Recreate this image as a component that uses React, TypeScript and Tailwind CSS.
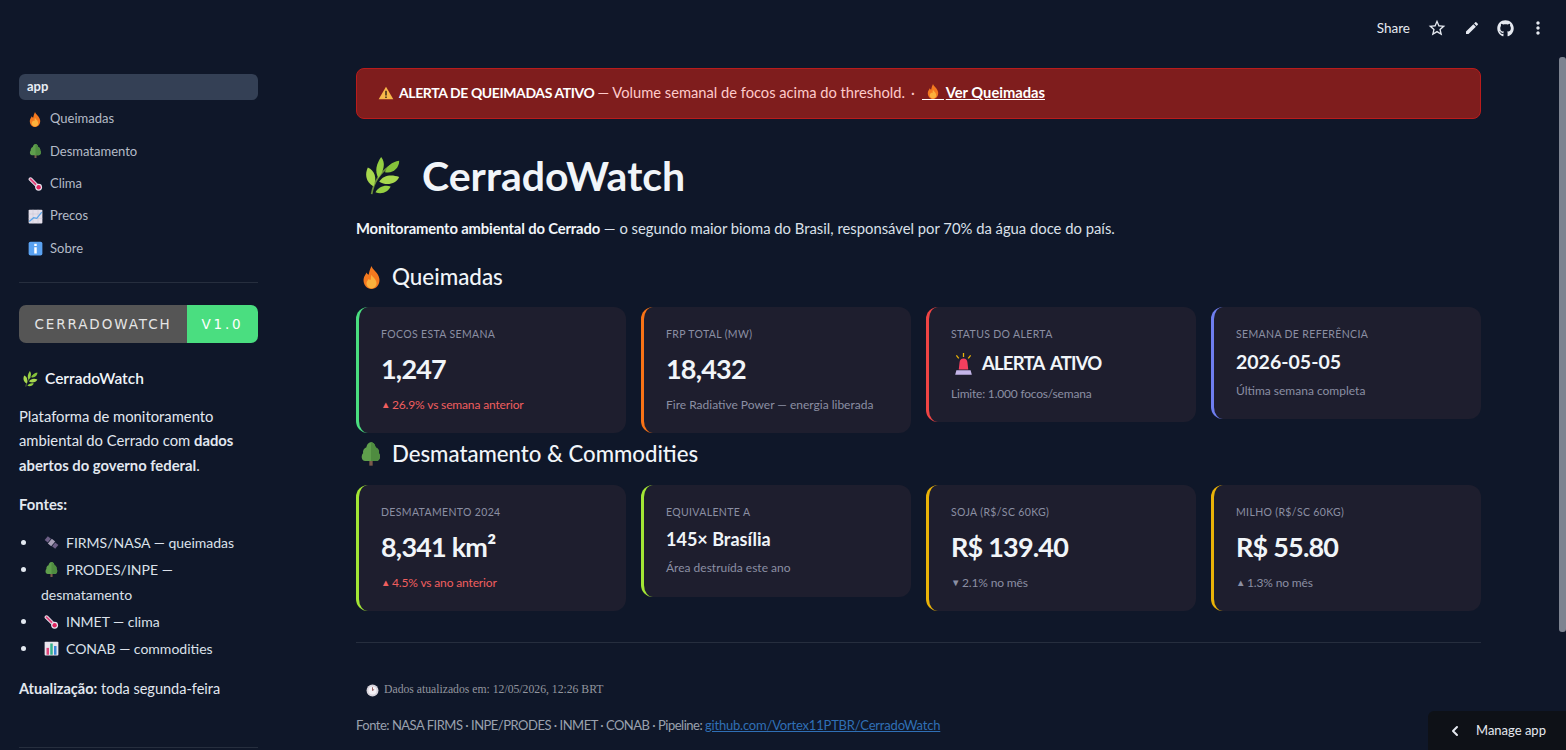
import React from "react";
import { MdStarBorder, MdEdit, MdMoreVert } from "react-icons/md";
import { FaGithub } from "react-icons/fa";
import { ChevronLeft } from "lucide-react";

type IconProps = { className?: string };

const Flame = ({ className }: IconProps) => (
  <svg viewBox="0 0 24 32" className={className}>
    <path d="M12 0c1 5 10 9 11 18 1 8-5 14-11 14S0 26 1 18c.5-4 3-6 4-9 1 2 2 3 3 3 1-4 2-8 4-12z" fill="#f4791f" />
    <path d="M12 12c1 3 7 6 7 12 0 4-3 7-7 7s-7-3-7-7c0-3 2-4 3-6 1 1 2 1 3 1 0-2 0-4 1-7z" fill="#fbb13c" />
  </svg>
);
const Evergreen = ({ className }: IconProps) => (
  <svg viewBox="0 0 24 28" className={className}>
    <rect x="10" y="20" width="4" height="8" fill="#7a5a4a" />
    <path d="M12 0c3 0 5 3 5.500 6 3 1 4.500 4 4 7 2 2 2 9-3 9.500H5C0 22 0 15 2.500 13c-.5-3 1-6 4-7C7 3 9 0 12 0z" fill="#5f9f4c" />
    <path d="M12 0c3 0 5 3 5.500 6 3 1 4.500 4 4 7 2 2 2 9-3 9.500H12z" fill="#4f8c40" />
  </svg>
);
const Thermo = ({ className }: IconProps) => (
  <svg viewBox="0 0 24 24" className={className}>
    <path d="M4 5 L15 16" stroke="#e9e3ee" strokeWidth="6" strokeLinecap="round" />
    <path d="M4 5 L15 16" stroke="#e0457b" strokeWidth="3" strokeLinecap="round" />
    <circle cx="17" cy="18" r="5.500" fill="#e9e3ee" />
    <circle cx="17" cy="18" r="3.500" fill="#e0245e" />
  </svg>
);
const ChartUp = ({ className }: IconProps) => (
  <svg viewBox="0 0 24 24" className={className}>
    <rect x="1" y="1" width="22" height="22" rx="1.500" fill="#e4dfea" />
    <path d="M1 8h22M1 15h22M8 1v22M16 1v22" stroke="#c6c0d0" strokeWidth="0.800" />
    <path d="M2 20 L9 14 L14 15 L22 5" stroke="#5aa5e8" strokeWidth="2" fill="none" />
  </svg>
);
const Info = ({ className }: IconProps) => (
  <svg viewBox="0 0 24 24" className={className}>
    <rect x="1" y="1" width="22" height="22" rx="3" fill="#5aa2f2" />
    <rect x="10" y="10" width="4" height="10" fill="#fff" />
    <rect x="10" y="4.500" width="4" height="3.500" fill="#fff" />
  </svg>
);
const Herb = ({ className }: IconProps) => (
  <svg viewBox="0 0 40 40" className={className}>
    <path d="M7 39c2-12 8-22 20-30" stroke="#6b8e3a" strokeWidth="1.800" fill="none" />
    <path d="M9 31C0 26 0 17 3 11c7 3 10 11 6 20z" fill="#a8d84e" />
    <path d="M14 22c-4-7-2-15 3-22 5 6 3 15-3 22z" fill="#95cf42" />
    <path d="M15 26c4-7 13-8 21-5-3 7-13 10-21 5z" fill="#a8d84e" />
    <path d="M21 16c2-6 7-11 15-12 0 8-7 14-15 12z" fill="#85c13a" />
    <path d="M11 37c3-5 9-8 16-6-2 5-9 9-16 6z" fill="#95cf42" />
  </svg>
);
const Satellite = ({ className }: IconProps) => (
  <svg viewBox="0 0 24 24" className={className}>
    <g transform="rotate(40 12 12)">
      <rect x="8.500" y="7" width="7" height="10" fill="#a9a0b8" />
      <rect x="1" y="8" width="6.500" height="8" fill="#6d5f86" />
      <rect x="16.500" y="8" width="6.500" height="8" fill="#6d5f86" />
    </g>
  </svg>
);
const Bars = ({ className }: IconProps) => (
  <svg viewBox="0 0 24 24" className={className}>
    <rect x="1" y="1" width="22" height="22" rx="1.500" fill="#e9e5ee" />
    <rect x="4" y="11" width="4" height="11" fill="#e0457b" />
    <rect x="10" y="4" width="4" height="18" fill="#37b28d" />
    <rect x="16" y="8" width="4" height="14" fill="#3a87d8" />
  </svg>
);
const Warning = ({ className }: IconProps) => (
  <svg viewBox="0 0 24 22" className={className}>
    <path d="M12 1 L23.500 21 H.5z" fill="#f8b84a" />
    <rect x="10.800" y="7.500" width="2.400" height="7.500" fill="#3a2a1a" />
    <rect x="10.800" y="16.500" width="2.400" height="2.400" fill="#3a2a1a" />
  </svg>
);
const Siren = ({ className }: IconProps) => (
  <svg viewBox="0 0 24 28" className={className}>
    <path d="M12 0v5M3 3l3 4M21 3l-3 4" stroke="#eab308" strokeWidth="1.600" />
    <path d="M6 21l1-9c.3-3 2-5 5-5s4.700 2 5 5l1 9z" fill="#f43f5e" />
    <path d="M3 22h18l1.500 5.500h-21z" fill="#c4b5e8" />
  </svg>
);
const Clock = ({ className }: IconProps) => (
  <svg viewBox="0 0 24 24" className={className}>
    <circle cx="12" cy="12" r="11" fill="#d8d4dc" />
    <circle cx="12" cy="12" r="7.500" fill="#f4f1f6" />
    <path d="M12 6v6l3-2" stroke="#8a4a4a" strokeWidth="1.600" fill="none" />
  </svg>
);

const navItems: [React.ReactNode, string][] = [
  [<Flame className="h-[15px] w-[12px]" />, "Queimadas"],
  [<Evergreen className="h-[14px] w-[13px]" />, "Desmatamento"],
  [<Thermo className="h-[15px] w-[15px]" />, "Clima"],
  [<ChartUp className="h-[15px] w-[15px]" />, "Precos"],
  [<Info className="h-[15px] w-[15px]" />, "Sobre"],
];

const sources: [React.ReactNode, string, string?][] = [
  [<Satellite className="h-[15px] w-[15px]" />, "FIRMS/NASA — queimadas"],
  [<Evergreen className="h-[15px] w-[15px]" />, "PRODES/INPE —", "desmatamento"],
  [<Thermo className="h-[15px] w-[15px]" />, "INMET — clima"],
  [<Bars className="h-[15px] w-[15px]" />, "CONAB — commodities"],
];

function Sidebar() {
  return (
    <aside className="flex w-[277px] shrink-0 flex-col px-[19px] pt-[74px] text-[14.800px] text-[#e2e8f0]">
      <div className="flex h-[26px] items-center rounded-[6px] bg-[#344055] px-2 text-[13px] font-bold text-[#e8edf4]">app</div>
      <nav className="mt-[3px] flex flex-col">
        {navItems.map(([icon, label]) => (
          <div key={label} className="flex h-[32.300px] items-center text-[13px] text-[#b4bbc7]">
            <span className="flex w-[31px] justify-center pl-[1px]">{icon}</span>
            <span>{label}</span>
          </div>
        ))}
      </nav>
      <div className="mt-[17.500px] h-px bg-[#262e3e]" />
      <div className="mt-[22px] flex h-[38px] overflow-hidden rounded-[7px] font-['DejaVu_Sans'] text-[13.500px] text-[#e5e5e5]">
        <span className="flex w-[168px] items-center justify-center bg-[#555555] tracking-[1.900px]">CERRADOWATCH</span>
        <span className="flex flex-1 items-center justify-center bg-[#4ade80] font-medium tracking-[2.800px] text-white">V1.0</span>
      </div>
      <div className="mt-[25px] flex h-[22px] items-center text-[15.500px] font-semibold text-[#f1f5f9]">
        <Herb className="mr-[6px] ml-[4px] h-[16px] w-[16px]" />CerradoWatch
      </div>
      <p className="mt-[14px] leading-[24.500px]">
        Plataforma de monitoramento ambiental do Cerrado com <strong className="font-bold">dados</strong> <strong className="font-bold">abertos do governo federal</strong>.
      </p>
      <p className="mt-[15px] font-bold leading-[24px]">Fontes:</p>
      <ul className="mt-[13px] flex flex-col text-[14px]">
        {sources.map(([icon, label, more]) => (
          <li key={label} className="flex flex-col text-[#dbe1ea]">
            <div className="relative flex h-[27px] items-center pl-[24px]">
              <span className="absolute left-[2px] h-[5px] w-[5px] rounded-full bg-[#e2e8f0]" />
              <span className="mr-[7px] flex w-[16px] justify-center">{icon}</span>
              {label}
            </div>
            {more && <div className="h-[25px] pl-[22px] leading-[23px]">{more}</div>}
          </li>
        ))}
      </ul>
      <p className="mt-[15px] text-[14.500px] leading-[24px]">
        <strong className="font-bold">Atualização:</strong> toda segunda-feira
      </p>
      <div className="mt-[46px] h-px bg-[#262e3e]" />
    </aside>
  );
}

type CardData = {
  color: string;
  label: string;
  value: React.ReactNode;
  sub: React.ReactNode;
  valueClass: string;
  subClass?: string;
  height: string;
};

const Tri = ({ c }: { c: string }) => <span className="inline-block w-[11px] text-[9.500px]">{c}</span>;

const big = "text-[27px] tracking-[-0.800px] h-[36px] mt-[9px]";

const row1: CardData[] = [
  {
    color: "border-l-[#4ade80]",
    label: "Focos esta semana",
    value: "1,247",
    valueClass: big,
    sub: <><Tri c="▲" /><span className="tracking-[-0.150px]">26.9% vs semana anterior</span></>,
    subClass: "text-[#f05f5f] mt-[9px]",
    height: "h-[126px]",
  },
  {
    color: "border-l-[#f97316]",
    label: "FRP Total (MW)",
    value: "18,432",
    valueClass: big,
    sub: "Fire Radiative Power — energia liberada",
    subClass: "mt-[9px]",
    height: "h-[126px]",
  },
  {
    color: "border-l-[#ef4444]",
    label: "Status do alerta",
    value: (
      <span className="flex items-center [word-spacing:3px]">
        <Siren className="mr-[9px] ml-[3px] h-[24px] w-[19px]" />
        ALERTA ATIVO
      </span>
    ),
    valueClass: "text-[18.500px] tracking-[-0.800px] h-[28px] mt-[8px]",
    sub: "Limite: 1.000 focos/semana",
    subClass: "mt-[7px] tracking-[-0.200px]",
    height: "h-[115px]",
  },
  {
    color: "border-l-[#6f7ef0]",
    label: "Semana de referência",
    value: "2026-05-05",
    valueClass: "text-[19.500px] h-[26px] mt-[7px]",
    sub: "Última semana completa",
    subClass: "mt-[7px]",
    height: "h-[112px]",
  },
];

const row2: CardData[] = [
  {
    color: "border-l-[#a3e635]",
    label: "Desmatamento 2024",
    value: "8,341 km²",
    valueClass: big,
    sub: <><Tri c="▲" /><span className="tracking-[-0.150px]">4.5% vs ano anterior</span></>,
    subClass: "text-[#f05f5f] mt-[9px]",
    height: "h-[126px]",
  },
  {
    color: "border-l-[#a3e635]",
    label: "Equivalente a",
    value: "145× Brasília",
    valueClass: "text-[18px] h-[26px] mt-[6px]",
    sub: "Área destruída este ano",
    subClass: "mt-[7px]",
    height: "h-[112px]",
  },
  {
    color: "border-l-[#eab308]",
    label: "Soja (R$/sc 60kg)",
    value: "R$ 139.40",
    valueClass: big,
    sub: <><Tri c="▼" /><span className="tracking-[-0.150px]">2.1% no mês</span></>,
    subClass: "mt-[9px]",
    height: "h-[126px]",
  },
  {
    color: "border-l-[#eab308]",
    label: "Milho (R$/sc 60kg)",
    value: "R$ 55.80",
    valueClass: big,
    sub: <><Tri c="▲" /><span className="tracking-[-0.150px]">1.3% no mês</span></>,
    subClass: "mt-[9px]",
    height: "h-[126px]",
  },
];

function Card({ c }: { c: CardData }) {
  return (
    <div className={`rounded-[12px] border-l-[3px] bg-[#1e1e2e] pl-[22px] pt-[21px] ${c.color} ${c.height}`}>
      <div className="flex h-[14px] items-center text-[10.500px] uppercase tracking-[0.350px] text-[#8b8fa3]">{c.label}</div>
      <div className={`flex items-center font-bold text-[#f1f5f9] ${c.valueClass}`}>{c.value}</div>
      <div className={`flex h-[18px] items-center text-[12px] text-[#8b8fa3] ${c.subClass ?? ""}`}>{c.sub}</div>
    </div>
  );
}

function Main() {
  return (
    <main className="ml-[79px] flex w-[1125px] shrink-0 flex-col pt-[68px]">
      <div className="flex h-[51px] items-center rounded-[8px] border border-[#b91c1c] bg-[#7f1d1d] pb-[2px] pl-[21px] text-[14.700px] text-[#fecaca]">
        <Warning className="mr-[5px] h-[14px] w-[16px]" />
        <strong className="text-[14px] font-bold tracking-[-0.400px] text-white">ALERTA DE QUEIMADAS ATIVO</strong>
        <span className="ml-[3px]">— Volume semanal de focos acima do threshold.</span>
        <span className="mx-[6px]">·</span>
        <span className="flex items-center font-bold text-white underline">
          <span className="ml-[1px] mr-[2px] flex w-[22px] justify-center border-b border-white">
            <Flame className="h-[15px] w-[12px]" />
          </span>
          Ver Queimadas
        </span>
      </div>
      <h1 className="mt-[34px] flex h-[46px] items-center text-[41px] font-bold text-[#f1f5f9]">
        <Herb className="mr-[19px] ml-[9px] h-[38px] w-[38px]" />CerradoWatch
      </h1>
      <p className="mt-[17px] h-[24px] text-[14.800px] leading-[24px] text-[#dbe1ea]">
        <strong className="font-bold tracking-[-0.150px] text-[#f1f5f9]">Monitoramento ambiental do Cerrado</strong> — o segundo maior bioma do Brasil, responsável por 70% da água doce do país.
      </p>
      <h2 className="mt-[22px] flex h-[30px] items-center text-[22.400px] font-medium text-[#f1f5f9]">
        <Flame className="mr-[11px] ml-[6px] h-[23px] w-[19px]" />Queimadas
      </h2>
      <div className="mt-[15px] grid grid-cols-4 items-start gap-[15px]">
        {row1.map((c) => <Card key={c.label} c={c} />)}
      </div>
      <h2 className="mt-[6px] flex h-[30px] items-center text-[22.200px] font-medium text-[#f1f5f9]">
        <Evergreen className="mr-[11px] ml-[5px] h-[24px] w-[20px]" />Desmatamento &amp; Commodities
      </h2>
      <div className="mt-[16px] grid grid-cols-4 items-start gap-[15px]">
        {row2.map((c) => <Card key={c.label} c={c} />)}
      </div>
      <div className="mt-[31px] h-px bg-[#262e3e]" />
      <div className="mt-[39px] flex h-[16px] items-center pl-[10px] font-['Liberation_Serif'] text-[11.700px] text-[#93969f]">
        <Clock className="mr-[5px] h-[13px] w-[13px]" />Dados atualizados em: 12/05/2026, 12:26 BRT
      </div>
      <p className="mt-[16px] h-[22px] text-[13px] leading-[22px] text-[#9aa1ae]">
        <span className="tracking-[-0.500px]">Fonte: NASA FIRMS · INPE/PRODES · INMET · CONAB · Pipeline: </span>
        <span className="tracking-[-0.200px] text-[#2f6fb5] underline">github.com/Vortex11PTBR/CerradoWatch</span>
      </p>
    </main>
  );
}

export default function App() {
  return (
    <div className="relative flex h-[750px] w-[1566px] overflow-hidden bg-[#0f1729] font-['Lato',sans-serif]">
      <Sidebar />
      <Main />
      <div className="absolute right-[18px] top-[18px] flex h-[20px] items-center text-[#e5e9f0]">
        <span className="mr-[17px] text-[13.500px]">Share</span>
        <MdStarBorder className="mr-[17px] text-[20px]" />
        <MdEdit className="mr-[17px] text-[16px]" />
        <FaGithub className="mr-[14px] text-[17px]" />
        <MdMoreVert className="text-[20px]" />
      </div>
      <div className="absolute right-0 top-[57px] h-[575px] w-[7px] rounded-[3px] bg-[#7d8390]" />
      <div className="absolute bottom-0 right-0 flex h-[39px] w-[138px] items-center rounded-tl-[6px] bg-[#0e1117] pl-[19px] text-[13px] text-[#e5e9f0]">
        <ChevronLeft className="mr-[13px] h-[16px] w-[16px]" strokeWidth={3} />Manage app
      </div>
    </div>
  );
}
